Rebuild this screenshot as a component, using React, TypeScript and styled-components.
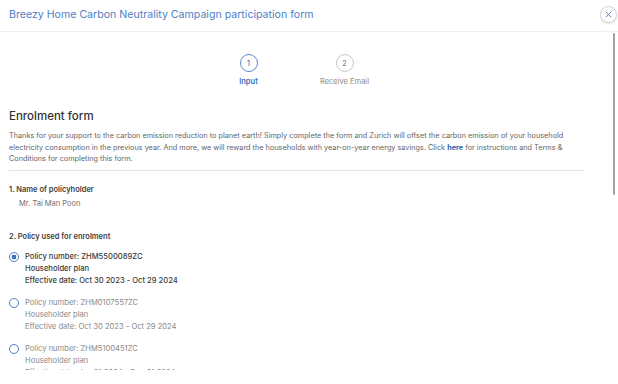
import React, { useState } from 'react';
import styled, { createGlobalStyle } from 'styled-components';

const policies = [
  { number: 'ZHM5500089ZC', plan: 'Householder plan', dates: 'Oct 30 2023 - Oct 29 2024' },
  { number: 'ZHM0107557ZC', plan: 'Householder plan', dates: 'Oct 30 2023 - Oct 29 2024' },
  { number: 'ZHM5100451ZC', plan: 'Householder plan', dates: 'Jan 01 2024 - Dec 31 2024' },
];

function App() {
  const [selected, setSelected] = useState(0);

  return (
    <>
      <GlobalStyle />
      <Modal>
        <Header>
          <Title>Breezy Home Carbon Neutrality Campaign participation form</Title>
          <CloseButton aria-label="Close">
            <svg width="7" height="7" viewBox="0 0 10 10">
              <path d="M1.5 1.5 L8.5 8.5 M8.5 1.5 L1.5 8.5" stroke="#4a7fc8" strokeWidth="1.4" strokeLinecap="round" />
            </svg>
          </CloseButton>
        </Header>

        <Body>
          <Content>
            <Stepper>
              <Step>
                <StepCircle $active>1</StepCircle>
                <StepLabel $active>Input</StepLabel>
              </Step>
              <Step>
                <StepCircle>2</StepCircle>
                <StepLabel>Receive Email</StepLabel>
              </Step>
            </Stepper>

            <Heading>Enrolment form</Heading>
            <Intro>
              Thanks for your support to the carbon emission reduction to planet earth! Simply complete the form and Zurich will offset the carbon emission of your household electricity consumption in the previous year. And more, we will reward the households with year-on-year energy savings. Click <Link>here</Link> for instructions and Terms &amp; Conditions for completing this form.
            </Intro>
            <Divider />

            <Field>
              <FieldLabel>1. Name of policyholder</FieldLabel>
              <FieldValue>Mr. Tai Man Poon</FieldValue>
            </Field>

            <Field>
              <FieldLabel>2. Policy used for enrolment</FieldLabel>
              <Options>
                {policies.map((p, i) => (
                  <Option key={p.number} onClick={() => setSelected(i)}>
                    <Radio $checked={selected === i} />
                    <OptionText $checked={selected === i}>
                      <span>Policy number: {p.number}</span>
                      <span>{p.plan}</span>
                      <span>Effective date: {p.dates}</span>
                    </OptionText>
                  </Option>
                ))}
              </Options>
            </Field>
          </Content>
          <ScrollThumb />
        </Body>
      </Modal>
    </>
  );
}

const GlobalStyle = createGlobalStyle`
  html, body {
    margin: 0;
    padding: 0;
    background: #ffffff;
  }
  body {
    font-family: Inter, "Open Sans", "Liberation Sans", sans-serif;
    -webkit-font-smoothing: antialiased;
  }
`;

const Modal = styled.div`
  width: 618px;
  height: 384px;
  display: flex;
  flex-direction: column;
  background: #ffffff;
  overflow: hidden;
`;

const Header = styled.div`
  height: 32px;
  flex-shrink: 0;
  display: flex;
  align-items: center;
  justify-content: space-between;
  padding: 0 1px 2px 9px;
  box-sizing: border-box;
  border-bottom: 1px solid #f0f0f0;
`;

const Title = styled.h1`
  margin: 0;
  font-size: 10.6px;
  font-weight: 400;
  color: #4f80c6;
`;

const CloseButton = styled.button`
  width: 17px;
  height: 17px;
  padding: 0;
  border-radius: 50%;
  border: 1px solid #d6d6d6;
  background: #ffffff;
  box-shadow: 0 1px 2px rgba(0, 0, 0, 0.12);
  display: flex;
  align-items: center;
  justify-content: center;
  cursor: pointer;
`;

const Body = styled.div`
  position: relative;
  height: 338px;
  flex-shrink: 0;
  overflow: hidden;
`;

const ScrollThumb = styled.div`
  position: absolute;
  top: 1px;
  right: 3px;
  width: 2px;
  height: 162px;
  border-radius: 1px;
  background: #a3a3a3;
`;

const Content = styled.div`
  padding: 22px 34px 24px 9px;
`;

const Stepper = styled.div`
  display: flex;
  justify-content: center;
`;

const Step = styled.div`
  width: 96px;
  display: flex;
  flex-direction: column;
  align-items: center;
  gap: 5px;
`;

const StepCircle = styled.div<{ $active?: boolean }>`
  width: 18px;
  height: 18px;
  box-sizing: border-box;
  border-radius: 50%;
  border: 1px solid ${p => (p.$active ? '#5b8ad0' : '#c8c8c8')};
  color: ${p => (p.$active ? '#3d6fb8' : '#888888')};
  font-size: 7px;
  font-weight: 500;
  display: flex;
  align-items: center;
  justify-content: center;
`;

const StepLabel = styled.div<{ $active?: boolean }>`
  font-size: 7.5px;
  font-weight: ${p => (p.$active ? 600 : 400)};
  color: ${p => (p.$active ? '#3d6fb8' : '#8c8c8c')};
`;

const Heading = styled.h2`
  margin: 23px 0 0;
  font-size: 11.5px;
  font-weight: 500;
  color: #333333;
`;

const Intro = styled.p`
  margin: 7px 0 0;
  font-size: 7.3px;
  line-height: 11.5px;
  color: #666666;
`;

const Link = styled.a`
  color: #2f64b0;
  font-weight: 700;
  cursor: pointer;
`;

const Divider = styled.hr`
  margin: 5px 0 0;
  border: 0;
  border-top: 1.5px solid #e2e2e2;
`;

const Field = styled.section`
  margin-top: 14px;
  display: flex;
  flex-direction: column;
  gap: 5px;
  & + & {
    margin-top: 24px;
  }
`;

const FieldLabel = styled.div`
  font-size: 7.5px;
  font-weight: 600;
  color: #404040;
`;

const FieldValue = styled.div`
  padding-left: 10px;
  font-size: 7.5px;
  color: #707070;
`;

const Options = styled.div`
  display: flex;
  flex-direction: column;
  gap: 11px;
  margin-top: 6px;
`;

const Option = styled.label`
  display: flex;
  align-items: flex-start;
  gap: 6px;
  cursor: pointer;
`;

const Radio = styled.span<{ $checked?: boolean }>`
  width: 10px;
  height: 10px;
  box-sizing: border-box;
  flex-shrink: 0;
  border-radius: 50%;
  border: 1.5px solid #4d7fc7;
  background: ${p => (p.$checked ? 'radial-gradient(circle, #3f73bf 0 2.2px, #ffffff 2.6px)' : '#ffffff')};
`;

const OptionText = styled.div<{ $checked?: boolean }>`
  display: flex;
  flex-direction: column;
  font-size: 7.6px;
  line-height: 12px;
  margin-top: -1px;
  font-weight: ${p => (p.$checked ? 500 : 400)};
  color: ${p => (p.$checked ? '#3a3a3a' : '#8a8a8a')};
`;

export default App;
